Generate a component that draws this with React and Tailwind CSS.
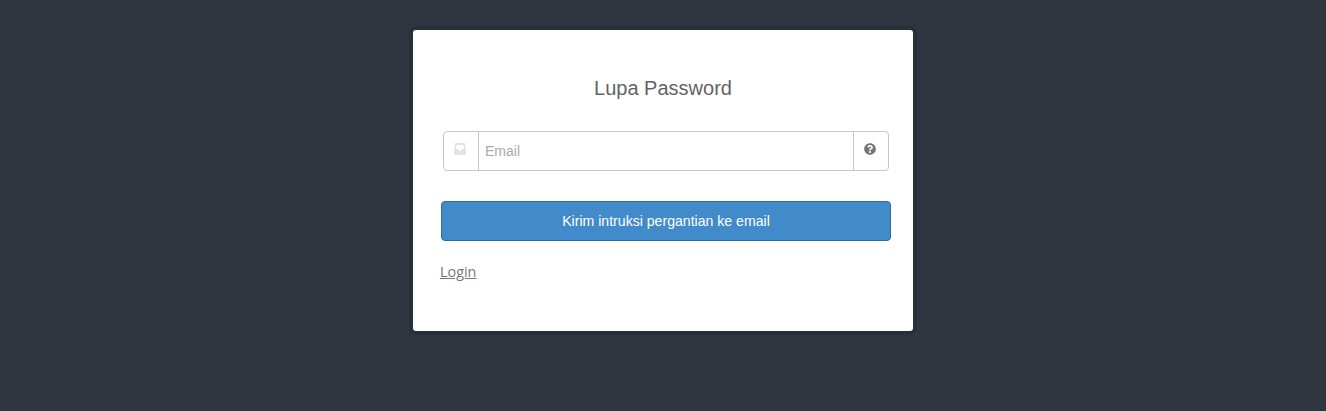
import React from 'react';
import { FaQuestionCircle } from 'react-icons/fa';

const InboxIcon = () => (
  <svg viewBox="0 0 12 12" className="h-3 w-3" fill="currentColor">
    <path
      fillRule="evenodd"
      d="M2 0h8c.6 0 1 .4 1 1l1 6v4c0 .6-.4 1-1 1H1c-.6 0-1-.4-1-1V7l1-6c0-.6.4-1 1-1zm.6 2L2 6h2l1 2h2l1-2h2l-.6-4z"
    />
  </svg>
);

const App = () => {
  return (
    <div className="min-h-[411px] bg-[#2f3640] pt-[26px] font-['Liberation_Sans',Arial,sans-serif]">
      <div className="mx-auto w-[508px] rounded-[7px] border-4 border-[#2a303a]">
        <div className="h-[301px] rounded-[3px] bg-white px-[27px] pt-[44px]">
          <h1 className="text-center text-[20px] leading-[28px] font-normal text-[#636363]">Lupa Password</h1>

          <div className="mt-[29px] ml-[3px] flex h-10 w-[446px] rounded border border-[#c8c8c8] bg-white">
            <div className="flex w-[35px] justify-center border-r border-[#c8c8c8] pt-[11px] pr-[2px] text-[#e4e4e4]">
              <InboxIcon />
            </div>
            <input
              type="text"
              placeholder="Email"
              className="min-w-0 flex-1 bg-transparent px-[6px] text-[14px] text-[#555] placeholder:text-[#a9a9a9] outline-none"
            />
            <div className="flex w-[35px] justify-center border-l border-[#c8c8c8] pt-[11px] pr-[2px] text-[#757575]">
              <FaQuestionCircle className="h-3 w-3" />
            </div>
          </div>

          <button
            type="button"
            className="ml-px mt-[30px] block h-10 w-[450px] rounded border border-[#2e6da4] bg-[#428bca] pt-px text-[14.1px] text-white"
          >
            Kirim intruksi pergantian ke email
          </button>

          <div className="mt-[19px]">
            <a href="#" className="font-['Open_Sans',sans-serif] text-[14.4px] leading-5 text-[#777] underline">
              Login
            </a>
          </div>
        </div>
      </div>
    </div>
  );
};

export default App;
